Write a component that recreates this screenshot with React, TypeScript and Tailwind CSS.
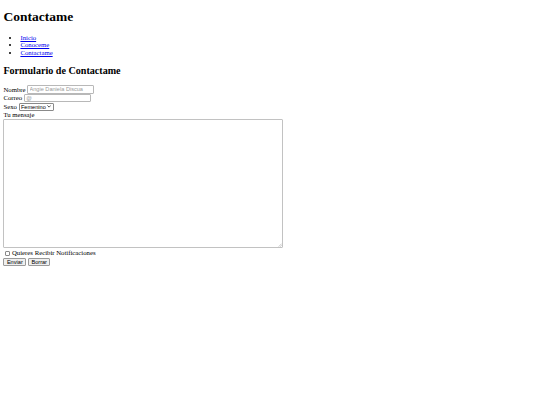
import { useState } from "react";

const links = ["Inicio", "Conoceme", "Contactame"];

export default function App() {
  const [sexo, setSexo] = useState("Femenino");

  return (
    <div className="min-h-[405px] bg-white px-[3.4px] font-['Liberation_Serif',serif] text-black">
      <h1 className="mt-[9px] mb-[9px] text-[13.5px] font-bold leading-[15.5px]">Contactame</h1>

      <ul className="my-[6.75px] list-disc pl-[17px] text-[6.75px] leading-[7.75px]">
        {links.map((l) => (
          <li key={l}>
            <a href="#" className="text-[#0000ee] underline">
              {l}
            </a>
          </li>
        ))}
      </ul>

      <h2 className="mt-[8.4px] mb-[8.4px] text-[10.1px] font-bold leading-[11.6px]">
        Formulario de Contactame
      </h2>

      <form className="text-[6.75px] leading-[7.75px]" onSubmit={(e) => e.preventDefault()}>
        <div className="flex h-[8.6px] items-center gap-[1.7px]">
          <label htmlFor="nombre">Nombre</label>
          <input
            id="nombre"
            type="text"
            placeholder="Angie Daniela Discua"
            className="h-[8.4px] w-[67px] rounded-[1px] border border-[#b8b8b8] px-[1.3px] font-['Liberation_Sans',sans-serif] text-[5.6px] placeholder:text-[#9a9a9a]"
          />
        </div>
        <div className="flex h-[8.6px] items-center gap-[1.7px]">
          <label htmlFor="correo">Correo</label>
          <input
            id="correo"
            type="email"
            placeholder="@"
            className="h-[8.4px] w-[67px] rounded-[1px] border border-[#b8b8b8] px-[1.3px] font-['Liberation_Sans',sans-serif] text-[5.6px] placeholder:text-[#9a9a9a]"
          />
        </div>
        <div className="flex h-[8.6px] items-center gap-[1.7px]">
          <label htmlFor="sexo">Sexo</label>
          <span className="relative inline-flex">
            <select
              id="sexo"
              value={sexo}
              onChange={(e) => setSexo(e.target.value)}
              className="h-[8.2px] w-[35px] appearance-none rounded-[1px] border border-[#8a8a8a] bg-white pl-[1.3px] font-['Liberation_Sans',sans-serif] text-[5.6px] leading-[6px]"
            >
              <option>Femenino</option>
              <option>Masculino</option>
            </select>
            <svg
              viewBox="0 0 10 6"
              className="pointer-events-none absolute top-[2.8px] right-[2.2px] h-[2.6px] w-[4.2px]"
            >
              <path d="M1 1l4 4 4-4" fill="none" stroke="#000" strokeWidth="1.6" />
            </svg>
          </span>
        </div>
        <div className="h-[7.75px]">Tu mensaje</div>
        <div className="relative w-fit">
          <textarea className="block h-[129px] w-[280px] resize-none rounded-[1px] border border-[#c2c2c2]" />
          <svg viewBox="0 0 6 6" className="pointer-events-none absolute right-[1px] bottom-[1px] h-[4px] w-[4px]">
            <path d="M5.5 1L1 5.5M5.5 3.5L3.5 5.5" stroke="#9a9a9a" strokeWidth="0.8" />
          </svg>
        </div>

        <div className="mt-[1.5px] flex h-[8.4px] items-center gap-[1.7px]">
          <input
            type="checkbox"
            className="ml-[1.3px] h-[5.6px] w-[5.6px] appearance-none rounded-[1px] border border-[#8a8a8a] bg-white"
          />
          <span>Quieres Recibir Notificaciones</span>
        </div>
        <div className="flex h-[9px] items-center gap-[1.7px]">
          <button
            type="submit"
            className="h-[8.4px] rounded-[1px] border border-[#9a9a9a] bg-[#efefef] px-[2.5px] font-['Liberation_Sans',sans-serif] text-[5.6px] leading-[6px]"
          >
            Enviar
          </button>
          <button
            type="reset"
            className="h-[8.4px] rounded-[1px] border border-[#9a9a9a] bg-[#efefef] px-[2.5px] font-['Liberation_Sans',sans-serif] text-[5.6px] leading-[6px]"
          >
            Borrar
          </button>
        </div>
      </form>
    </div>
  );
}
